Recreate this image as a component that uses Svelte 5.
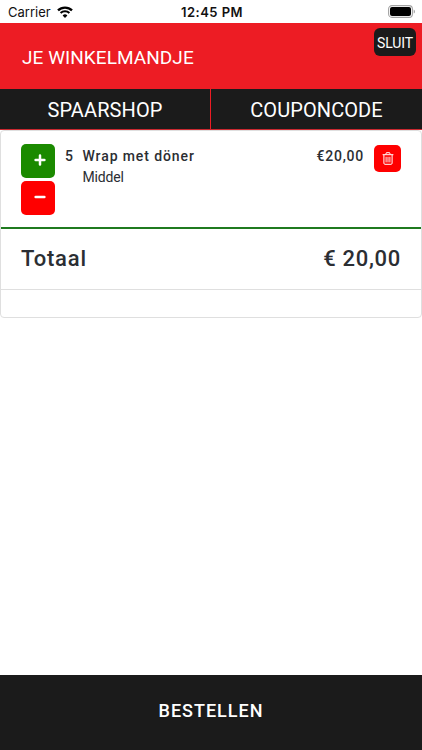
<script lang="ts">
	interface CartItem {
		id: number;
		name: string;
		variant: string;
		quantity: number;
		unitPrice: number;
	}

	let items = $state<CartItem[]>([
		{ id: 1, name: 'Wrap met döner', variant: 'Middel', quantity: 5, unitPrice: 4 }
	]);

	const total = $derived(items.reduce((sum, item) => sum + item.quantity * item.unitPrice, 0));

	function formatPrice(value: number): string {
		return value.toFixed(2).replace('.', ',');
	}

	function removeItem(id: number) {
		items = items.filter((item) => item.id !== id);
	}

	function changeQuantity(item: CartItem, delta: number) {
		item.quantity += delta;
		if (item.quantity < 1) removeItem(item.id);
	}
</script>

<div class="screen">
	<div class="status-bar">
		<div class="carrier">
			<span>Carrier</span>
			<svg class="wifi" viewBox="0 0 16 12" fill="none" stroke="#000">
				<path d="M1 4.4a10 10 0 0 1 14 0" stroke-width="2.3" />
				<path d="M3.6 7.1a6.3 6.3 0 0 1 8.8 0" stroke-width="2.1" />
				<path d="M8 12L5.6 9.5a3.5 3.5 0 0 1 4.8 0z" fill="#000" stroke="none" />
			</svg>
		</div>
		<span class="clock">12:45 PM</span>
		<svg class="battery" viewBox="0 0 28 13">
			<rect x="0.6" y="0.6" width="23.8" height="11.8" rx="3.4" fill="none" stroke="#a3a3a3" stroke-width="1.1" />
			<rect x="2" y="2" width="21" height="9" rx="2" fill="#000" />
			<path d="M25.7 4.4c1.7.6 1.7 3.6 0 4.2z" fill="#a3a3a3" />
		</svg>
	</div>

	<header class="cart-header">
		<h1>JE WINKELMANDJE</h1>
		<button class="close-btn" type="button">SLUIT</button>
	</header>

	<nav class="tabs">
		<button type="button">SPAARSHOP</button>
		<button type="button">COUPONCODE</button>
	</nav>

	<main class="card">
		{#each items as item (item.id)}
			<div class="cart-row">
				<div class="quantity-buttons">
					<button class="plus" type="button" aria-label="Meer" onclick={() => changeQuantity(item, 1)}>
						<svg viewBox="0 0 12 12"><path d="M6 1.6v8.8M1.6 6h8.8" /></svg>
					</button>
					<button class="minus" type="button" aria-label="Minder" onclick={() => changeQuantity(item, -1)}>
						<svg viewBox="0 0 12 12"><path d="M1.6 6h8.8" /></svg>
					</button>
				</div>
				<span class="quantity">{item.quantity}</span>
				<div class="product">
					<div class="product-name">{item.name}</div>
					<div class="variant">{item.variant}</div>
				</div>
				<span class="price">€{formatPrice(item.quantity * item.unitPrice)}</span>
				<button class="remove-btn" type="button" aria-label="Verwijder" onclick={() => removeItem(item.id)}>
					<svg viewBox="0 0 12 13" fill="none" stroke="#fff">
						<path d="M0.6 2.7h10.8M3.7 2.5l.7-1.8h3.2l.7 1.8" />
						<path d="M1.9 2.9v8.3q0 1.1 1.1 1.1h6q1.1 0 1.1-1.1V2.9" />
						<path d="M4.1 4.8v5.6M6 4.8v5.6M7.9 4.8v5.6" stroke-width="0.9" />
					</svg>
				</button>
			</div>
		{/each}

		<div class="total-row">
			<span>Totaal</span>
			<span class="amount">€ {formatPrice(total)}</span>
		</div>
		<div class="card-footer"></div>
	</main>

	<button class="order-btn" type="button">BESTELLEN</button>
</div>

<style>
	:global(body) {
		margin: 0;
		background: #fff;
	}

	.screen {
		display: flex;
		flex-direction: column;
		height: 100vh;
		overflow: hidden;
		font-family: Roboto, 'Liberation Sans', sans-serif;
		color: #2b2e33;
		background: #fff;
	}

	button {
		margin: 0;
		padding: 0;
		border: none;
		font-family: inherit;
		color: #fff;
		cursor: pointer;
	}

	.status-bar {
		display: grid;
		grid-template-columns: 1fr auto 1fr;
		align-items: center;
		flex: none;
		box-sizing: border-box;
		height: 23px;
		padding: 0 6px 0 8px;
		font-family: Inter, sans-serif;
		font-size: 13px;
		color: #111;
	}

	.carrier {
		display: flex;
		align-items: center;
		gap: 6px;
	}

	.wifi {
		width: 16px;
		height: 12px;
	}

	.clock {
		font-weight: 600;
		letter-spacing: 0.45px;
	}

	.battery {
		justify-self: end;
		width: 28px;
		height: 13px;
	}

	.cart-header {
		display: flex;
		align-items: flex-start;
		justify-content: space-between;
		flex: none;
		box-sizing: border-box;
		height: 66px;
		padding: 5px 6px 0 22px;
		background: #ed1c24;
	}

	h1 {
		margin: 18px 0 0;
		font-size: 19px;
		font-weight: 400;
		line-height: 24px;
		letter-spacing: 0.05px;
		color: #fff;
	}

	.close-btn {
		width: 42px;
		height: 28px;
		padding-top: 2px;
		font-size: 14px;
		letter-spacing: -0.1px;
		background: #1b1b1b;
		border-radius: 6px;
	}

	.tabs {
		display: grid;
		grid-template-columns: 211px 1fr;
		flex: none;
		height: 40px;
		border-bottom: 1px solid #ca2930;
		background: #1b1b1b;
	}

	.tabs button {
		padding-top: 2px;
		font-size: 20px;
		letter-spacing: 0.1px;
		background: none;
	}

	.tabs button:first-child {
		border-right: 1px solid #ed1c24;
	}

	.card {
		flex: none;
		border: 1px solid #dfdfdf;
		border-radius: 4px;
	}

	.cart-row {
		display: flex;
		align-items: flex-start;
		box-sizing: border-box;
		height: 98px;
		padding: 13px 20px 0;
		border-bottom: 2px solid #1f7a1f;
	}

	.quantity-buttons {
		display: flex;
		flex-direction: column;
		gap: 3px;
	}

	.quantity-buttons button {
		display: flex;
		align-items: center;
		justify-content: center;
		box-sizing: border-box;
		width: 34px;
		height: 34px;
		padding: 0 0 2px 3px;
		border-radius: 5px;
	}

	.quantity-buttons svg {
		width: 12px;
		height: 12px;
		fill: none;
		stroke: #fff;
		stroke-width: 2.5;
		stroke-linecap: round;
	}

	.plus {
		background: #1b8a00;
	}

	.minus {
		background: #f00;
	}

	.quantity {
		width: 17px;
		margin-left: 10px;
	}

	.quantity,
	.product-name,
	.price {
		padding-top: 2px;
		font-size: 14px;
		font-weight: 500;
		line-height: 20px;
		letter-spacing: 0.9px;
	}

	.price {
		letter-spacing: 0.75px;
	}

	.product {
		flex: 1;
		padding-left: 0.5px;
	}

	.variant {
		font-size: 14px;
		line-height: 23px;
		letter-spacing: -0.15px;
	}

	.remove-btn {
		display: flex;
		align-items: center;
		justify-content: center;
		width: 27px;
		height: 27px;
		margin: 1px 0 0 10px;
		background: #f00;
		border-radius: 5px;
	}

	.remove-btn svg {
		width: 12px;
		height: 13px;
	}

	.total-row {
		display: flex;
		align-items: center;
		justify-content: space-between;
		box-sizing: border-box;
		height: 61px;
		padding: 0 20px 1px;
		font-size: 22px;
		font-weight: 500;
		letter-spacing: 0.8px;
		border-bottom: 1px solid #dfdfdf;
	}

	.amount {
		letter-spacing: 0.7px;
	}

	.card-footer {
		height: 27px;
	}

	.order-btn {
		flex: none;
		height: 75px;
		margin-top: auto;
		padding-bottom: 4px;
		font-size: 18px;
		font-weight: 500;
		letter-spacing: 1px;
		background: #1b1b1b;
	}
</style>
